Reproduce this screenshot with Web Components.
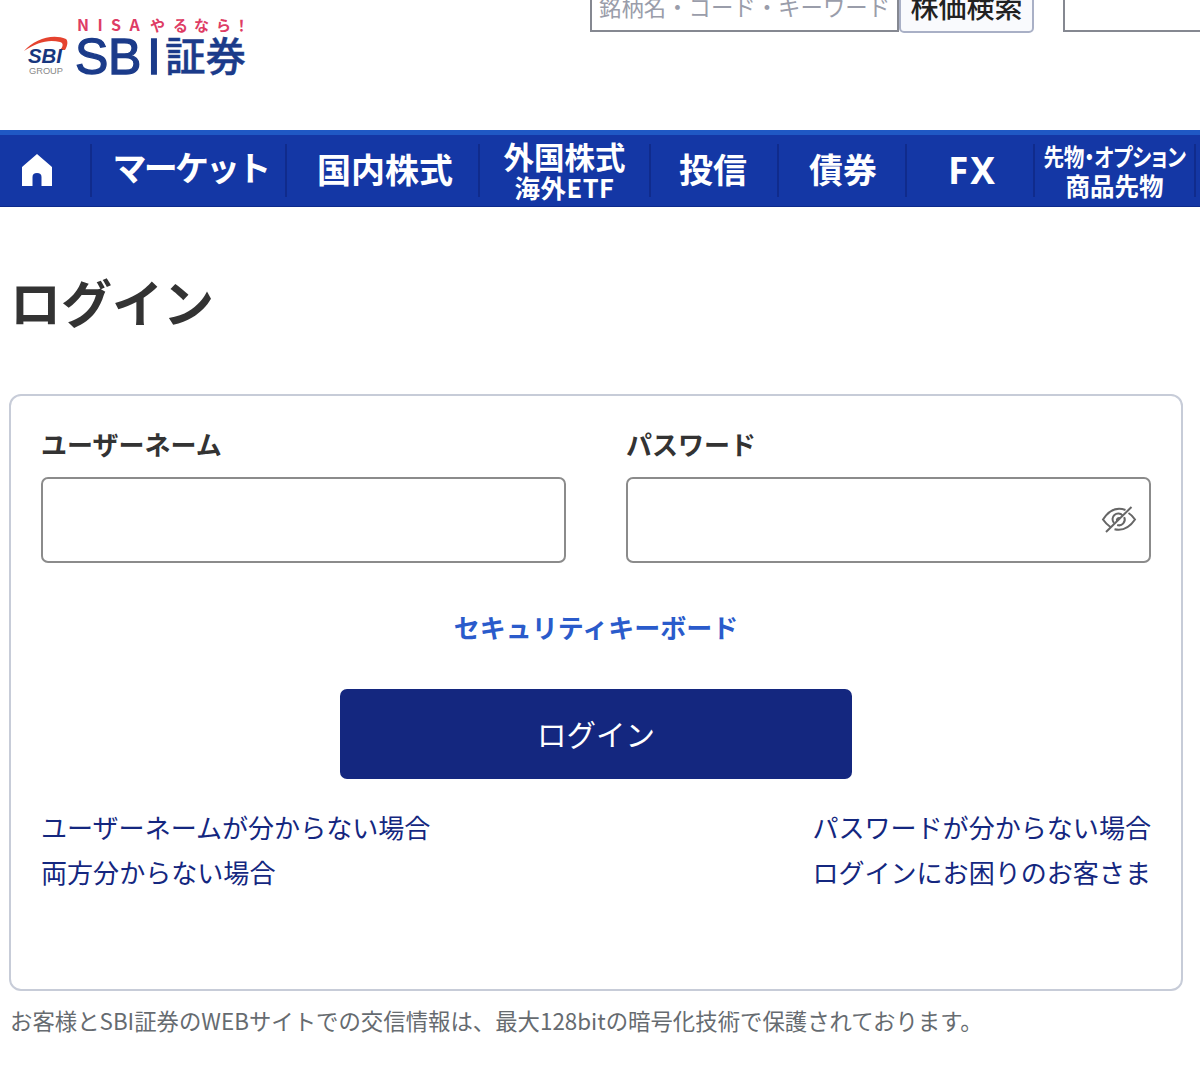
<!DOCTYPE html>
<html lang="ja">

<head>
	<meta charset="UTF-8">
	<meta name="viewport" content="width=device-width, initial-scale=1.0">
	<title>ログイン</title>
	<style>
		body {
			margin: 0;
			overflow: hidden;
			background: #fff;
			color: #333;
			font-family: "Noto Sans CJK JP", "Noto Sans", sans-serif;
		}
	</style>
</head>

<body>
	<login-page></login-page>

	<template id="site-logo">
		<style>
			:host { display: block; width: 230px; height: 70px; }
			svg { display: block; }
			.jp { font-family: "Noto Sans CJK JP", sans-serif; }
			.en { font-family: "Liberation Sans", sans-serif; }
		</style>
		<svg width="230" height="70" viewBox="20 12 230 70">
			<text class="jp" y="31" font-size="16" font-weight="700" fill="#de3c64" x="77 97.500 111 129.500">NISA</text>
			<text class="jp" y="31" font-size="15" font-weight="700" fill="#de3c64" x="150 173 194 216 234">やるなら！</text>
			<path d="M24 51C34 39 53 33 66 39C68 41 68 45 65 50L60 50C63 47 64 43 60 42C49 39 37 42 24 51Z" fill="#e5432f" />
			<text class="en" x="28" y="62.500" font-size="20" font-weight="700" font-style="italic" fill="#17367e" textLength="34" lengthAdjust="spacingAndGlyphs">SBI</text>
			<text class="en" x="29" y="74" font-size="9" fill="#888" textLength="34" lengthAdjust="spacingAndGlyphs">GROUP</text>
			<g fill="#1b3b8a" stroke="#1b3b8a">
				<text class="en" x="75 108 147" y="73.500" font-size="50" stroke-width="1.3">SBI</text>
				<text class="jp" x="165" y="71" font-size="40" font-weight="500" stroke-width=".4" textLength="81" lengthAdjust="spacingAndGlyphs">証券</text>
			</g>
		</svg>
	</template>

	<template id="search-bar">
		<style>
			:host { display: flex; height: 50px; margin-top: -18px; }
			.query, .other {
				box-sizing: border-box;
				border: 2px solid #858891;
				font-size: 22.4px;
				line-height: 45px;
				color: #9a9daa;
				white-space: nowrap;
			}
			.query { width: 309px; padding-left: 7px; }
			.go {
				box-sizing: border-box;
				width: 135px;
				height: 51px;
				border: 2px solid #a9b0c6;
				border-radius: 0 0 5px 5px;
				background: #f9fafd;
				color: #222;
				text-align: center;
				font-size: 28px;
				font-weight: 500;
				line-height: 44px;
			}
			.other { width: 160px; margin-left: 29px; }
		</style>
		<div class="query">銘柄名・コード・キーワード</div>
		<div class="go">株価検索</div>
		<div class="other"></div>
	</template>

	<template id="nav-item">
		<style>
			:host {
				box-sizing: border-box;
				flex: none;
				display: flex;
				flex-direction: column;
				align-items: center;
				justify-content: center;
				height: 53px;
				border-right: 2px solid #102b8c;
				color: #fff;
				font-weight: 700;
				white-space: nowrap;
			}
		</style>
		<slot></slot>
	</template>

	<template id="global-nav">
		<style>
			:host {
				box-sizing: border-box;
				display: flex;
				align-items: center;
				height: 77px;
				border-top: 5px solid #1f58c4;
				border-bottom: 1px solid #0c2a8c;
				background: #1437a5;
			}
			span { display: block; }
			.home { display: block; margin: 0 17px 2px 0; }
			.m { font-size: 34px; line-height: 48px; margin-bottom: 4px; }
			.narrow {
				font-size: 24px;
				line-height: 30px;
				letter-spacing: -.4px;
				font-feature-settings: "palt";
				transform: scaleX(.86);
			}
		</style>
		<nav-item style="width: 92px">
			<svg class="home" width="32" height="34" viewBox="0 0 32 34"><path d="M16 1L31 14V33H20.500V24Q20.500 20 16 20T11.500 24V33H1V14Z" fill="#fff" /></svg>
		</nav-item>
		<nav-item style="width: 195px"><span class="m" style="letter-spacing: -2.800px; margin: 0 0 7px 4px">マーケット</span></nav-item>
		<nav-item style="width: 193px"><span class="m" style="margin-left: 5px">国内株式</span></nav-item>
		<nav-item style="width: 171px"><span style="font-size: 30.500px; line-height: 32px">外国株式</span><span style="font-size: 25.500px; line-height: 29px; letter-spacing: .5px">海外ETF</span></nav-item>
		<nav-item style="width: 128px"><span class="m" style="margin-right: 2px">投信</span></nav-item>
		<nav-item style="width: 128px"><span class="m" style="margin-left: 2px">債券</span></nav-item>
		<nav-item style="width: 128px"><span class="m" style="font: 700 37px/48px 'Noto Sans', sans-serif; letter-spacing: 2px; margin-left: 5px; margin-bottom: 2px">FX</span></nav-item>
		<nav-item style="width: 161px"><span class="narrow">先物・オプション</span><span style="font-size: 24.500px; line-height: 30px">商品先物</span></nav-item>
	</template>

	<template id="text-field">
		<style>
			:host { display: block; flex: 1; }
			label { display: block; height: 38px; font-size: 26px; font-weight: 700; line-height: 36px; }
			.box {
				box-sizing: border-box;
				display: flex;
				align-items: center;
				justify-content: flex-end;
				height: 86px;
				margin-top: 13px;
				padding-right: 12px;
				border: 2px solid #8b8b8b;
				border-radius: 7px;
			}
		</style>
		<label><slot></slot></label>
		<div class="box"><slot name="icon"></slot></div>
	</template>

	<template id="login-card">
		<style>
			:host {
				box-sizing: border-box;
				display: block;
				width: 1174px;
				height: 597px;
				padding: 30px 30px 0;
				border: 2px solid #c7ccd8;
				border-radius: 12px;
			}
			.fields { display: flex; gap: 60px; }
			.keyboard {
				margin-top: 42px;
				text-align: center;
				color: #2a5bcb;
				font-size: 26px;
				font-weight: 700;
				line-height: 44px;
			}
			button {
				display: block;
				width: 512px;
				height: 90px;
				margin: 40px auto 0;
				padding: 0 0 2px;
				border: 0;
				border-radius: 7px;
				background: #14277f;
				color: #fff;
				font: 29.500px/88px "Noto Sans CJK JP", sans-serif;
			}
			.links {
				display: flex;
				justify-content: space-between;
				margin-top: 26px;
				color: #14277f;
				font-size: 26.050px;
				line-height: 45px;
			}
		</style>
		<div class="fields">
			<text-field>ユーザーネーム</text-field>
			<text-field>パスワード
				<svg slot="icon" width="36" height="30" viewBox="0 0 36 30" fill="none" stroke="#666" stroke-width="2">
					<path d="M24.500 5Q11.500 0 2 14.500Q5 19 10 22.500M13.500 24.200Q25.500 27 34 14.500Q31.500 10.500 27.500 8" />
					<path d="M21.500 10.300A5.700 5.700 0 0 0 13 18M23.200 12.200A5.700 5.700 0 0 1 16.200 20" />
					<path d="M18.800 13A2.300 2.300 0 0 0 16 16" />
					<path d="M5 27L30.500 2" />
				</svg>
			</text-field>
		</div>
		<div class="keyboard">セキュリティキーボード</div>
		<button type="button">ログイン</button>
		<div class="links">
			<div>ユーザーネームが分からない場合<br>両方分からない場合</div>
			<div>パスワードが分からない場合<br>ログインにお困りのお客さま</div>
		</div>
	</template>

	<template id="login-page">
		<style>
			:host { display: block; width: 1200px; height: 1082px; overflow: hidden; }
			header { display: flex; align-items: flex-start; height: 130px; }
			site-logo { margin: 12px 340px 0 20px; }
			main { padding: 0 9px; }
			h1 { margin: 0; padding: 54px 0 93px 1px; font-size: 51px; font-weight: 700; line-height: 80px; height: 40px; }
			p { margin: 9px 0 0 1px; color: #666b70; font-size: 22.400px; line-height: 40px; white-space: nowrap; }
		</style>
		<header>
			<site-logo></site-logo>
			<search-bar></search-bar>
		</header>
		<global-nav></global-nav>
		<main>
			<h1>ログイン</h1>
			<login-card></login-card>
			<p>お客様とSBI証券のWEBサイトでの交信情報は、最大128bitの暗号化技術で保護されております。</p>
		</main>
	</template>

	<script>
		class TemplateElement extends HTMLElement {
			constructor() {
				super();
				const template = document.getElementById(this.localName);
				this.attachShadow({ mode: "open" }).append(template.content.cloneNode(true));
			}
		}
		for (const name of ["site-logo", "search-bar", "nav-item", "global-nav", "text-field", "login-card", "login-page"]) {
			customElements.define(name, class extends TemplateElement { });
		}
	</script>
</body>

</html>
